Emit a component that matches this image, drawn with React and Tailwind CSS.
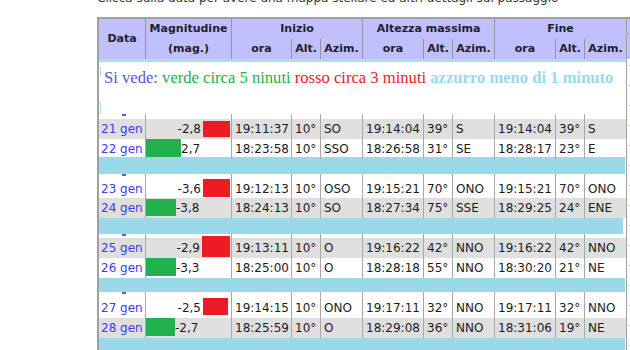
import React from 'react';

const COLS =
  'grid grid-cols-[46px_86px_60px_29px_42px_61px_29px_42px_61px_29px_42px]';

const blocks = [
  {
    gap: 'h-[5px]',
    rows: [
      { date: '21 gen', mag: '-2,8', kind: 'red', box: 'w-[27px] h-[16px] mt-[2px]', h: 'h-[20px]', bg: 'bg-[#dfdfdf]', d: ['19:11:37', '10°', 'SO', '19:14:04', '39°', 'S', '19:14:04', '39°', 'S'] },
      { date: '22 gen', mag: '2,7', kind: 'green', box: 'w-[35px] h-[18px]', h: 'h-[18px]', bg: 'bg-white', d: ['18:23:58', '10°', 'SSO', '18:26:58', '31°', 'SE', '18:28:17', '23°', 'E'] },
    ],
    bar: 'h-[17px] w-[526px]',
  },
  {
    gap: 'h-[5px]',
    rows: [
      { date: '23 gen', mag: '-3,6', kind: 'red', box: 'w-[27px] h-[18px]', h: 'h-[19px]', bg: 'bg-white', d: ['19:12:13', '10°', 'OSO', '19:15:21', '70°', 'ONO', '19:15:21', '70°', 'ONO'] },
      { date: '24 gen', mag: '-3,8', kind: 'green', box: 'w-[30px] h-[17px] mt-[1px]', h: 'h-[20px]', bg: 'bg-[#dfdfdf]', d: ['18:24:13', '10°', 'SO', '18:27:34', '75°', 'SSE', '18:29:25', '24°', 'ENE'] },
    ],
    bar: 'h-[16px] w-[524px]',
  },
  {
    gap: 'h-[4px]',
    rows: [
      { date: '25 gen', mag: '-2,9', kind: 'red', box: 'w-[28px] h-[21px] -mt-[2px]', h: 'h-[20px]', bg: 'bg-[#dfdfdf]', d: ['19:13:11', '10°', 'O', '19:16:22', '42°', 'NNO', '19:16:22', '42°', 'NNO'] },
      { date: '26 gen', mag: '-3,3', kind: 'green', box: 'w-[30px] h-[18px]', h: 'h-[20px]', bg: 'bg-white', d: ['18:25:00', '10°', 'O', '18:28:18', '55°', 'NNO', '18:30:20', '21°', 'NE'] },
    ],
    bar: 'h-[14px] w-[526px]',
  },
  {
    gap: 'h-[6px]',
    rows: [
      { date: '27 gen', mag: '-2,5', kind: 'red', box: 'w-[25px] h-[17px] mr-[2px]', h: 'h-[20px]', bg: 'bg-white', d: ['19:14:15', '10°', 'ONO', '19:17:11', '32°', 'NNO', '19:17:11', '32°', 'NNO'] },
      { date: '28 gen', mag: '-2,7', kind: 'green', box: 'w-[29px] h-[18px]', h: 'h-[20px]', bg: 'bg-[#dfdfdf]', d: ['18:25:59', '10°', 'O', '18:29:08', '36°', 'NNO', '18:31:06', '19°', 'NE'] },
    ],
    bar: 'h-[16px] w-[526px]',
  },
];

function GapRow({ h }) {
  return (
    <div className={`${COLS} ${h} bg-white`}>
      <div className="pl-[23px]">
        <div className="w-[4px] h-[2px] bg-[#5a5af0]" />
      </div>
      {Array.from({ length: 10 }).map((_, i) => (
        <div key={i} className="border-l border-[#a8a8a8]" />
      ))}
    </div>
  );
}

function DataRow({ r }) {
  return (
    <div className={`${COLS} ${r.h} ${r.bg} text-[12px] leading-[20px] text-[#1c1c1c]`}>
      <div className="pl-[2px] text-[#3c3cf0] whitespace-nowrap">{r.date}</div>
      {r.kind === 'red' ? (
        <div className="border-l border-[#a8a8a8] flex justify-end items-start pr-[1px]">
          <span>{r.mag}</span>
          <div className={`ml-[2px] bg-[#ed1c24] ${r.box}`} />
        </div>
      ) : (
        <div className="border-l border-[#a8a8a8] flex items-start">
          <div className={`bg-[#22b14c] ${r.box}`} />
          <span>{r.mag}</span>
        </div>
      )}
      {r.d.map((v, i) => (
        <div key={i} className="border-l border-[#a8a8a8] pl-[3px] whitespace-nowrap overflow-hidden">
          {v}
        </div>
      ))}
    </div>
  );
}

function Header() {
  const line = 'border-l border-[#9494a4]';
  return (
    <div className={`${COLS} grid-rows-[20px_20px] bg-[#c0c0ff] text-[11px] font-bold text-[#1e1e2e] leading-[20px] text-center`}>
      <div className="row-span-2 flex items-center justify-center">Data</div>
      <div className={line}>Magnitudine</div>
      <div className={`col-span-3 ${line}`}>Inizio</div>
      <div className={`col-span-3 ${line}`}>Altezza massima</div>
      <div className={`col-span-3 ${line}`}>Fine</div>
      <div className={line}>(mag.)</div>
      {['ora', 'Alt.', 'Azim.', 'ora', 'Alt.', 'Azim.', 'ora', 'Alt.', 'Azim.'].map((t, i) => (
        <div key={i} className={line}>{t}</div>
      ))}
    </div>
  );
}

function Legend() {
  return (
    <div className="border-t-[3px] border-[#a6e2ec] bg-white h-[55px] flex overflow-hidden">
      <div className="ml-[1px] w-[1px] flex flex-col">
        <div className="mt-[5px] h-[9px] bg-[#a6d8ea]" />
        <div className="mt-[26px] h-[12px] bg-[#a6d8ea]" />
      </div>
      <p className="pl-[3px] pt-[4px] font-['Liberation_Serif',serif] text-[16.6px] whitespace-nowrap">
        <span className="text-[#5656d4]">Si vede: </span>
        <span className="text-[#22b14c]">verde circa 5 ninuti </span>
        <span className="text-[#ed1c24]">rosso circa 3 minuti </span>
        <span className="text-[#99d9ea] font-bold">azzurro meno di 1 minuto</span>
      </p>
    </div>
  );
}

export default function App() {
  return (
    <div className="w-[630px] h-[350px] overflow-hidden bg-white font-['DejaVu_Sans',Verdana,sans-serif]">
      <div className="h-[17px] overflow-hidden pl-[97px]">
        <p className="-mt-[9px] text-[12px] leading-[14px] text-[#333] whitespace-nowrap">
          Clicca sulla data per avere una mappa stellare ed altri dettagli sul passaggio
        </p>
      </div>
      <div className="ml-[97px] flex border-t-2 border-[#a0a0a0]">
        <div className="w-[530px] border-l-2 border-r border-[#a0a0a0]">
          <Header />
          <Legend />
          {blocks.map((b, i) => (
            <div key={i}>
              <GapRow h={b.gap} />
              {b.rows.map((r) => (
                <DataRow key={r.date} r={r} />
              ))}
              <div className={`bg-[#99d9ea] ${b.bar}`} />
            </div>
          ))}
        </div>
        <div className="w-[3px]">
          <div className="h-[40px] bg-[#c0c0ff] pt-[14px] pl-[1px]">
            <div className="w-[1px] h-[1px] bg-[#c08040]" />
          </div>
          {Array.from({ length: 15 }).map((_, i) => (
            <div key={i} className="h-[20px] pt-[6px] pl-[2px]">
              <div className="w-[1px] h-[1px] bg-[#d0a060]" />
            </div>
          ))}
        </div>
      </div>
    </div>
  );
}
